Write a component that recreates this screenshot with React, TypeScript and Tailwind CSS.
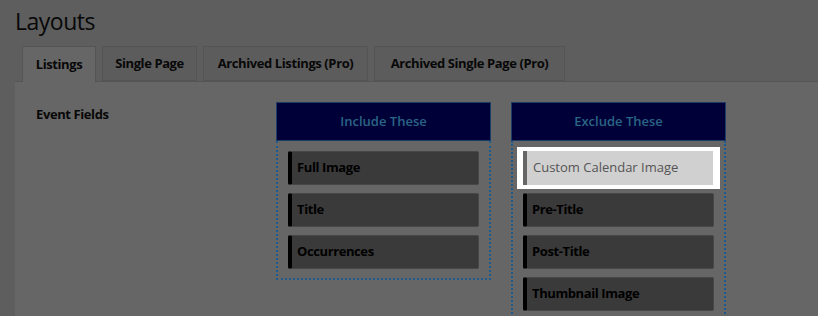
import React from 'react';

const tabs = [
    { label: 'Listings', active: true, w: 'w-[74px]' },
    { label: 'Single Page', active: false, w: 'w-[95px]' },
    { label: 'Archived Listings (Pro)', active: false, w: 'w-[165px]' },
    { label: 'Archived Single Page (Pro)', active: false, w: 'w-[191px]' },
];

const font = { fontFamily: '"Open Sans", "Liberation Sans", sans-serif' };

function Item({ label }: { label: string }) {
    return (
        <div className="h-[34px] flex items-center bg-[#3a3a3a] border border-[#474747] border-l-[4px] border-l-black rounded-[2px] pl-[5px] text-[13px] font-bold text-black tracking-[-0.4px]">
            {label}
        </div>
    );
}

function Column({ title, children }: { title: string; children: React.ReactNode }) {
    return (
        <div className="w-[215px]">
            <div className="h-[39px] bg-[#000038] border border-[#1d3d66] flex items-center justify-center text-[13px] font-semibold text-[#2a6585]">
                {title}
            </div>
            <div className="border-2 border-dotted border-t-0 border-[#1d5a90] px-[10px] pt-[10px] pb-[9px] flex flex-col gap-[8px]">
                {children}
            </div>
        </div>
    );
}

export default function App() {
    return (
        <div className="w-[818px] h-[316px] bg-[#5e5e5e] overflow-hidden" style={font}>
            <h1 className="pl-[15px] pt-[4px] h-[46px] text-[23px] text-[#080808] tracking-[-0.5px]">Layouts</h1>
            <div className="flex gap-[6px] pl-[22px] h-[35px] items-end">
                {tabs.map((t) => (
                    <div
                        key={t.label}
                        className={`${t.w} flex items-center justify-center text-[13px] font-bold text-[#080808] border border-[#545454] tracking-[-0.4px] ${
                            t.active ? 'h-[36px] bg-[#666666] border-b-0 relative top-[1px]' : 'h-[35px] bg-[#5c5c5c]'
                        }`}
                    >
                        {t.label}
                    </div>
                ))}
            </div>
            <div className="ml-[15px] h-[240px] bg-[#666666] border-t border-[#555555] flex">
                <div className="w-[261px] pl-[21px] pt-[23px] text-[13px] font-bold text-[#080808] tracking-[-0.4px]">Event Fields</div>
                <div className="pt-[20px] flex gap-[20px] items-start">
                    <Column title="Include These">
                        <Item label="Full Image" />
                        <Item label="Title" />
                        <Item label="Occurrences" />
                    </Column>
                    <Column title="Exclude These">
                        <div className="-mx-[6px] -mt-[4px] -mb-[4px] py-[4px] pl-[6px] pr-[7px] bg-white">
                            <div className="h-[34px] flex items-center bg-[#d0d0d0] border-l-[4px] border-l-[#666666] pl-[6px] text-[13px] text-[#555555]">
                                Custom Calendar Image
                            </div>
                        </div>
                        <Item label="Pre-Title" />
                        <Item label="Post-Title" />
                        <Item label="Thumbnail Image" />
                    </Column>
                </div>
            </div>
        </div>
    );
}
